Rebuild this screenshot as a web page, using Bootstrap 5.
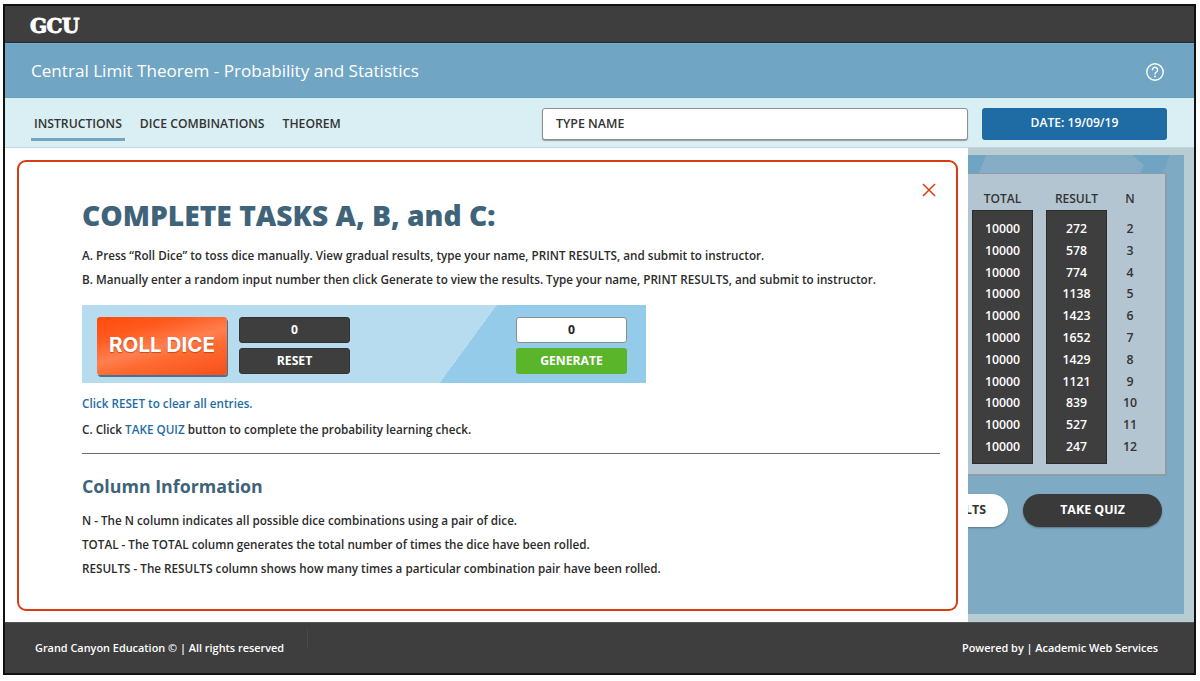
<!DOCTYPE html>
<html lang="en">
<head>
<meta charset="utf-8">
<title>Central Limit Theorem</title>
<link href="https://cdn.jsdelivr.net/npm/bootstrap@5.3.0/dist/css/bootstrap.min.css" rel="stylesheet">
<style>
html,body{height:100%;margin:0;background:#fff;overflow:hidden}
body{font-family:"Open Sans","Noto Sans",sans-serif;color:#2b2b2b;padding:4px 3px 6px 3px;font-weight:600}
.frame{width:1193px;height:671px;border:2px solid #111;display:flex;flex-direction:column;position:relative}
.topbar{height:37px;background:#3e3e3e;padding-left:25px;flex:none;border-bottom:1px solid #2d2d2d;overflow:hidden}
.logo{font-family:"DejaVu Serif",serif;font-weight:700;font-size:20px;letter-spacing:-.5px;color:#fff;line-height:40px;-webkit-text-stroke:.9px #fff;display:inline-block}
.titlebar{height:55px;background:#70a5c3;flex:none;padding:2px 29px 0 26px;border-top:1px solid #6fb0d3;border-bottom:1px solid #6ba0bd}
.titlebar h1{font-size:17.1px;font-weight:500;color:#fff;margin:0}
.navstrip{height:50px;background:#daeff4;flex:none;padding:2px 27px 0 26px;border-bottom:1px solid #c3d8de}
.tab{font-size:12.2px;font-weight:600;color:#333;text-decoration:none;padding:9px 3px 4px;border-bottom:3px solid transparent;margin-right:12px}
.tab.on{border-bottom-color:#70a5c3}
.namebox{width:426px;height:32px;margin-left:auto;margin-right:14px;border:1px solid #8a8f90;border-radius:3px;background:#fff;font-size:12.4px;padding:0 13px;color:#333;font-weight:600;box-shadow:0 1px 1px #999}
.namebox::placeholder{color:#333;opacity:1}
.datebtn{width:185px;height:32px;background:#1f6ca5;color:#fff;border:0;border-radius:3px;font-size:12.1px;font-weight:600;padding:0}
.stage{flex:1;min-height:0;background:#b7cdd1;position:relative;padding:7px 10px 8px 0;display:flex;justify-content:flex-end}
.bluefield{width:217px;background:#7eaac3;position:relative;padding:18px 17px 0 0}
.bannerart{position:absolute;left:0;top:0;width:100%;height:19px;display:block}
.resultpanel{position:relative;background:#b3c5d0;border:1px solid #8d9ca5;border-width:1px 2px 2px 0;height:303px;padding:16px 0 0 5px}
.colhead{font-size:12px;color:#333;text-align:center;height:20px}
.darkcol{background:#3e3e3e;color:#fff;border:1px solid #2c2c2c;height:254px;padding-top:7px}
.cellv{height:21.8px;line-height:21.8px;text-align:center;font-size:12.3px}
.c1{width:61px}.c2{width:61px;margin-left:13px}.c3{width:30px;margin-left:8px;color:#333}
.c3 .darkless{padding-top:8px}
.pillrow{position:relative;margin-top:18px;padding-right:5px;gap:15px}
.pill{height:33px;border-radius:17px;font-size:12.4px;font-weight:700;border:0;box-shadow:0 1px 2px rgba(0,0,0,.3)}
.pill-w{background:#fff;color:#333;width:150px;text-align:right;padding:0 22px 0 0;flex:none}
.pill-d{background:#3a3a3a;color:#fff;width:139px;flex:none}
.dialogback{position:absolute;left:0;top:0;bottom:0;width:963px;background:#fff;padding:12px 10px 11px 12px}
.dialogbox{height:100%;border:2px solid #d93c11;border-radius:9px;padding:37px 16px 0 63px;position:relative}
.closer{position:absolute;right:20px;top:21px;width:14px;height:14px;padding:0;background:none;border:0;line-height:0}
.dialogbox h2{font-size:28.2px;font-weight:800;color:#3f6479;margin:0 0 14px}
.dialogbox h3{font-size:17.8px;font-weight:700;color:#3f6479;margin:0 0 15px}
.para{font-size:11.7px;line-height:16px;margin:0 0 8px;color:#2b2b2b;font-weight:600}
.para.linkish{margin-bottom:10px}
.linkish{color:#1f6ca5}
.dicebar{width:564px;height:78px;margin:18px 0 12px;background:linear-gradient(126.2deg,#b7dcf0 0 66.8%,#94cbe8 66.8%);padding:12px 19px 0 15px;gap:12px}
.rollbtn{width:130px;height:58px;border:0;border-radius:3px;color:#fff;font-family:Inter,sans-serif;font-size:20.6px;font-weight:700;background:linear-gradient(165deg,#ff4a0c 0%,#ff5a1e 25%,#ff7f50 50%,#ff6a30 65%,#f5501a 100%);box-shadow:1px 2px 0 #46738d;padding:0;text-shadow:0 1px 1px rgba(120,40,0,.5)}
.stackbox{width:111px}
.slab{height:26px;width:111px;border-radius:3px;font-size:12.2px;font-weight:700;display:flex;align-items:center;justify-content:center;border:1px solid #333;padding:0}
.slab-d{background:#3e3e3e;color:#fff;margin-bottom:5px}
.slab-w{background:#fff;color:#222;border-color:#8a8f90;margin-bottom:5px}
.slab-g{background:#5ab52a;color:#fff;border:0}
.ruleline{border:0;border-top:1px solid #6e6e6e;opacity:1;margin:16px 0 22px}
.footbar{height:51px;background:#3e3e3e;color:#fff;flex:none;font-size:10.9px;font-weight:600;padding:0 36px 0 30px;border-top:1px solid #555;position:relative}
.footbar .vsep{position:absolute;left:302px;top:6px;height:19px;width:1px;background:#4a4a4a}
</style>
</head>
<body>
<div class="frame">
  <div class="topbar"><span class="logo">GCU</span></div>
  <div class="titlebar d-flex align-items-center justify-content-between">
    <h1>Central Limit Theorem - Probability and Statistics</h1>
    <svg width="20" height="20" viewBox="0 0 20 20" fill="none" stroke="#fff" stroke-width="1.4" aria-label="Help"><circle cx="10" cy="10" r="8.2"/><path d="M7.4 7.8a2.6 2.6 0 1 1 4.1 2.2c-.9.6-1.5 1-1.5 2.1" stroke-linecap="round"/><circle cx="10" cy="14.4" r=".9" fill="#fff" stroke="none"/></svg>
  </div>
  <div class="navstrip d-flex align-items-center">
    <a class="tab on" href="#">INSTRUCTIONS</a>
    <a class="tab" href="#">DICE COMBINATIONS</a>
    <a class="tab" href="#">THEOREM</a>
    <input class="namebox" type="text" placeholder="TYPE NAME">
    <button class="datebtn" type="button">DATE: 19/09/19</button>
  </div>
  <div class="stage">
    <div class="bluefield">
      <svg class="bannerart" viewBox="0 0 217 19" preserveAspectRatio="none" aria-hidden="true"><rect width="217" height="19" fill="#7eaac3"/><path d="M0 0h19l-7 19H0z" fill="#6fa5c3"/><path d="M19 0h146l12 10-4 9H12z" fill="#85aec6"/><path d="M165 0h38l-8 19h-22l4-9z" fill="#6fa5c3"/></svg>
      <div class="resultpanel d-flex">
        <div class="c1"><div class="colhead">TOTAL</div><div class="darkcol">
          <div class="cellv">10000</div><div class="cellv">10000</div><div class="cellv">10000</div><div class="cellv">10000</div><div class="cellv">10000</div><div class="cellv">10000</div><div class="cellv">10000</div><div class="cellv">10000</div><div class="cellv">10000</div><div class="cellv">10000</div><div class="cellv">10000</div>
        </div></div>
        <div class="c2"><div class="colhead">RESULT</div><div class="darkcol">
          <div class="cellv">272</div><div class="cellv">578</div><div class="cellv">774</div><div class="cellv">1138</div><div class="cellv">1423</div><div class="cellv">1652</div><div class="cellv">1429</div><div class="cellv">1121</div><div class="cellv">839</div><div class="cellv">527</div><div class="cellv">247</div>
        </div></div>
        <div class="c3"><div class="colhead">N</div><div class="darkless">
          <div class="cellv">2</div><div class="cellv">3</div><div class="cellv">4</div><div class="cellv">5</div><div class="cellv">6</div><div class="cellv">7</div><div class="cellv">8</div><div class="cellv">9</div><div class="cellv">10</div><div class="cellv">11</div><div class="cellv">12</div>
        </div></div>
      </div>
      <div class="pillrow d-flex justify-content-end">
        <button class="pill pill-w" type="button">PRINT RESULTS</button>
        <button class="pill pill-d" type="button">TAKE QUIZ</button>
      </div>
    </div>
    <div class="dialogback">
      <div class="dialogbox">
        <button class="closer" type="button" aria-label="Close"><svg width="14" height="14" viewBox="0 0 14 14" stroke="#d93c11" stroke-width="1.5"><path d="M1 1l12 12M13 1L1 13"/></svg></button>
        <h2>COMPLETE TASKS A, B, and C:</h2>
        <p class="para">A. Press “Roll Dice” to toss dice manually. View gradual results, type your name, PRINT RESULTS, and submit to instructor.</p>
        <p class="para">B. Manually enter a random input number then click Generate to view the results. Type your name, PRINT RESULTS, and submit to instructor.</p>
        <div class="dicebar d-flex">
          <button class="rollbtn" type="button">ROLL DICE</button>
          <div class="stackbox"><div class="slab slab-d">0</div><button class="slab slab-d" type="button">RESET</button></div>
          <div class="stackbox ms-auto"><div class="slab slab-w">0</div><button class="slab slab-g" type="button">GENERATE</button></div>
        </div>
        <p class="para linkish">Click RESET to clear all entries.</p>
        <p class="para">C. Click <span class="linkish">TAKE QUIZ</span> button to complete the probability learning check.</p>
        <hr class="ruleline">
        <h3>Column Information</h3>
        <p class="para">N - The N column indicates all possible dice combinations using a pair of dice.</p>
        <p class="para">TOTAL - The TOTAL column generates the total number of times the dice have been rolled.</p>
        <p class="para">RESULTS - The RESULTS column shows how many times a particular combination pair have been rolled.</p>
      </div>
    </div>
  </div>
  <div class="footbar d-flex align-items-center justify-content-between">
    <span class="vsep"></span>
    <span>Grand Canyon Education © | All rights reserved</span>
    <span>Powered by | Academic Web Services</span>
  </div>
</div>
<script src="https://cdn.jsdelivr.net/npm/bootstrap@5.3.0/dist/js/bootstrap.bundle.min.js"></script>
</body>
</html>
